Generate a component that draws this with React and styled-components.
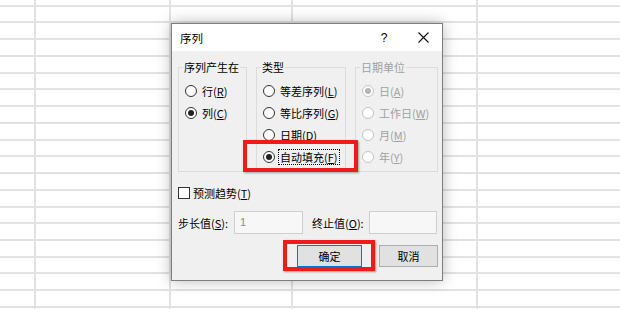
import React from "react";
import styled, { createGlobalStyle } from "styled-components";

const GlobalStyle = createGlobalStyle`
  html, body {
    margin: 0;
    padding: 0;
    background: #fff;
  }
  body {
    width: 620px;
    height: 309px;
    overflow: hidden;
    font-family: "Noto Sans CJK SC", "Noto Sans", sans-serif;
  }
`;

const Screen = styled.div`
  position: relative;
  width: 620px;
  height: 309px;
  overflow: hidden;
  background: #fff;
`;

/* spreadsheet behind the dialog */
const Sheet = styled.div`
  display: flex;
  flex-direction: column;
  margin-top: -10px;
`;

const SheetRow = styled.div`
  flex: none;
  display: grid;
  grid-template-columns: 36px 135px 122px 185px 1fr;
  height: 16.74px;
  box-sizing: border-box;
  border-bottom: 2px solid #e2e2e2;
`;

const SheetCell = styled.div`
  box-sizing: border-box;
  border-right: 2px solid #e2e2e2;
`;

/* dialog */
const Dialog = styled.div`
  position: absolute;
  left: 171px;
  top: 23px;
  width: 272px;
  height: 258px;
  box-sizing: border-box;
  border: 1px solid #7d7d7d;
  background: #f0f0f0;
  box-shadow: 0 0 14px rgba(0, 0, 0, 0.28);
  display: flex;
  flex-direction: column;
  font-size: 11px;
  color: #000;
`;

const TitleBar = styled.div`
  height: 27px;
  flex: none;
  background: #fff;
  display: flex;
  align-items: center;
  padding-left: 8px;
`;

const Title = styled.div`
  font-size: 11.5px;
  flex: 1;
`;

const HelpBtn = styled.div`
  width: 30px;
  margin-right: 5px;
  text-align: center;
  font-family: "Liberation Sans", sans-serif;
  font-size: 12px;
`;

const CloseBtn = styled.div`
  width: 38px;
  height: 27px;
  display: flex;
  align-items: center;
  justify-content: center;
`;

const Body = styled.div`
  flex: 1;
  display: flex;
  flex-direction: column;
  padding: 10px 4px 0 6px;
`;

const Groups = styled.div`
  display: flex;
  gap: 9px;
  align-items: stretch;
`;

const Group = styled.fieldset`
  margin: 0;
  min-width: 0;
  width: ${(p) => p.$w}px;
  box-sizing: border-box;
  padding: 7px 0 3px 6px;
  border: 1px solid #dcdcdc;
  display: flex;
  flex-direction: column;
`;

const Legend = styled.legend`
  margin-left: -2px;
  padding: 0 1px;
  line-height: 12px;
  font-size: 11px;
  color: ${(p) => (p.$disabled ? "#a0a0a0" : "#000")};
`;

const Option = styled.div`
  height: 22px;
  display: flex;
  align-items: center;
  gap: 3px;
  white-space: nowrap;
  color: ${(p) => (p.$disabled ? "#a0a0a0" : "#000")};
`;

const Circle = styled.span`
  flex: none;
  width: 12px;
  height: 12px;
  box-sizing: border-box;
  border-radius: 50%;
  border: 1px solid ${(p) => (p.$disabled ? "#c4c4c4" : "#333")};
  background: #fff;
  display: flex;
  align-items: center;
  justify-content: center;

  &::after {
    content: "";
    display: ${(p) => (p.$checked ? "block" : "none")};
    width: 6px;
    height: 6px;
    border-radius: 50%;
    background: ${(p) => (p.$disabled ? "#b4b4b4" : "#222")};
  }
`;

const OptionText = styled.span`
  line-height: 14px;
  padding: 0 1px;
  border: 1px dotted ${(p) => (p.$focus ? "#000" : "transparent")};
`;

const Key = styled.u`
  text-underline-offset: 1px;
`;

const CheckRow = styled.div`
  margin-top: 12px;
  height: 17px;
  display: flex;
  align-items: center;
  gap: 3px;
`;

const CheckBox = styled.span`
  width: 12px;
  height: 12px;
  box-sizing: border-box;
  border: 1px solid #333;
  background: #fff;
`;

const FieldRow = styled.div`
  margin-top: 10px;
  height: 23px;
  display: flex;
  align-items: center;
`;

const FieldLabel = styled.span`
  width: ${(p) => p.$w}px;
  margin-left: ${(p) => p.$ml || 0}px;
  white-space: nowrap;
`;

const Input = styled.div`
  width: ${(p) => p.$w}px;
  height: 23px;
  box-sizing: border-box;
  border: 1px solid #cfcfcf;
  box-shadow: inset 0 0 0 1px #f7f7f7;
  background: #f7f7f7;
  color: #8c8c8c;
  padding-left: 5px;
  line-height: 21px;
  font-family: "Liberation Sans", sans-serif;
  font-size: 11px;
`;

const ButtonRow = styled.div`
  margin-top: 11px;
  display: flex;
  justify-content: flex-end;
  gap: 17px;
`;

const Button = styled.div`
  width: ${(p) => p.$w}px;
  height: 22px;
  box-sizing: border-box;
  border: 1px solid ${(p) => (p.$primary ? "#0078d7" : "#adadad")};
  background: #e1e1e1;
  display: flex;
  align-items: center;
  justify-content: center;
`;

/* red annotation boxes */
const Mark = styled.div`
  position: absolute;
  left: ${(p) => p.$x}px;
  top: ${(p) => p.$y}px;
  width: ${(p) => p.$w}px;
  height: ${(p) => p.$h}px;
  box-sizing: border-box;
  border: 4px solid #ef1b1b;
  box-shadow: 1px 1px 2px rgba(0, 0, 0, 0.35);
`;

const Radio = ({ label, k, checked, disabled, focus }) => (
  <Option $disabled={disabled}>
    <Circle $checked={checked} $disabled={disabled} />
    <OptionText $focus={focus}>
      {label}(<Key>{k}</Key>)
    </OptionText>
  </Option>
);

const rows = Array.from({ length: 20 });

export default function App() {
  return (
    <>
      <GlobalStyle />
      <Screen>
        <Sheet>
          {rows.map((_, i) => (
            <SheetRow key={i}>
              <SheetCell />
              <SheetCell />
              <SheetCell />
              <SheetCell />
              <div />
            </SheetRow>
          ))}
        </Sheet>

        <Dialog>
          <TitleBar>
            <Title>序列</Title>
            <HelpBtn>?</HelpBtn>
            <CloseBtn>
              <svg width="11" height="11" viewBox="0 0 11 11">
                <path d="M0.5 0.5 L10.5 10.5 M10.5 0.5 L0.5 10.5" stroke="#111" strokeWidth="1.1" fill="none" />
              </svg>
            </CloseBtn>
          </TitleBar>
          <Body>
            <Groups>
              <Group $w={69}>
                <Legend>序列产生在</Legend>
                <Radio label="行" k="R" />
                <Radio label="列" k="C" checked />
              </Group>
              <Group $w={90}>
                <Legend>类型</Legend>
                <Radio label="等差序列" k="L" />
                <Radio label="等比序列" k="G" />
                <Radio label="日期" k="D" />
                <Radio label="自动填充" k="F" checked focus />
              </Group>
              <Group $w={83}>
                <Legend $disabled>日期单位</Legend>
                <Radio label="日" k="A" checked disabled />
                <Radio label="工作日" k="W" disabled />
                <Radio label="月" k="M" disabled />
                <Radio label="年" k="Y" disabled />
              </Group>
            </Groups>

            <CheckRow>
              <CheckBox />
              <span>
                预测趋势(<Key>T</Key>)
              </span>
            </CheckRow>

            <FieldRow>
              <FieldLabel $w={56}>
                步长值(<Key>S</Key>):
              </FieldLabel>
              <Input $w={69}>1</Input>
              <FieldLabel $w={57} $ml={9}>
                终止值(<Key>O</Key>):
              </FieldLabel>
              <Input $w={68} />
            </FieldRow>

            <ButtonRow>
              <Button $w={65} $primary>
                确定
              </Button>
              <Button $w={59}>取消</Button>
            </ButtonRow>
          </Body>
        </Dialog>

        <Mark $x={243} $y={140} $w={115} $h={32} />
        <Mark $x={283} $y={240} $w={92} $h={31} />
      </Screen>
    </>
  );
}
